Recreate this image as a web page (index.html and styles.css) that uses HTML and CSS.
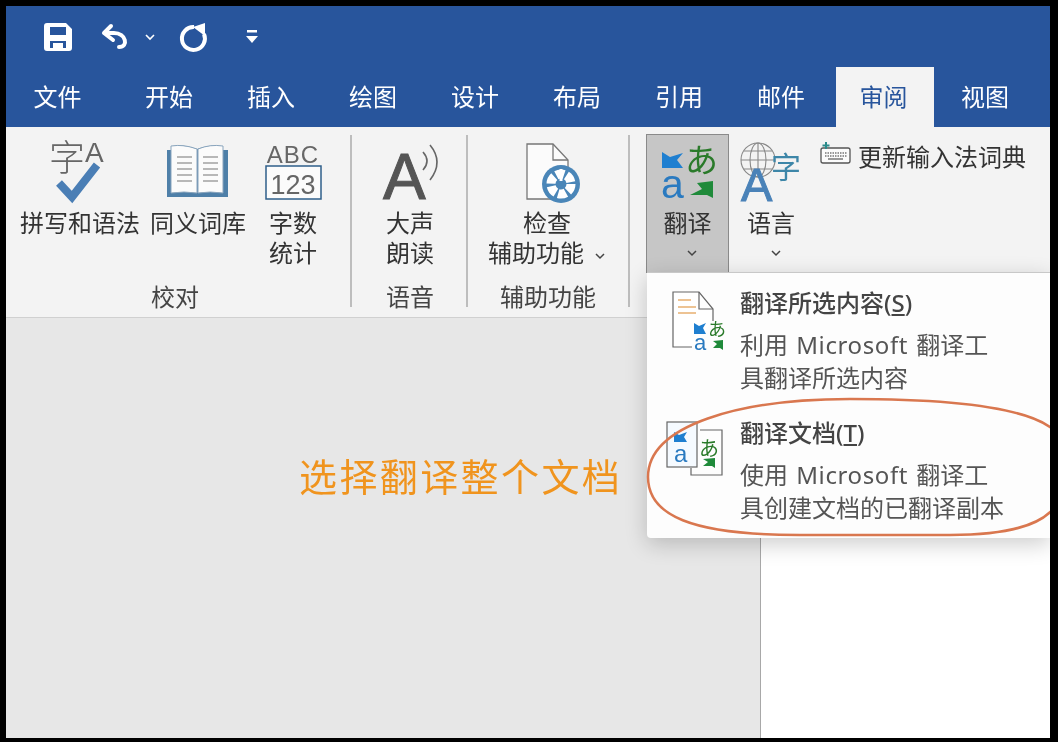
FILE: index.html
```html
<!DOCTYPE html>
<html lang="zh-CN">
<head>
    <meta charset="UTF-8">
    <title>审阅 - 翻译</title>
    <link rel="stylesheet" href="styles.css">
</head>
<body>
<div class="window">
    <div class="titlebar">
        <svg class="qa qa-save" width="28" height="30">
            <path fill="#fff" fill-rule="evenodd" d="M3 1H22L28 7V26Q28 29 25 29H3Q0 29 0 26V4Q0 1 3 1ZM6 5V13H22V5ZM6 19V26H9V21H19V26H22V19Z"/>
        </svg>
        <svg class="qa qa-undo" width="30" height="28" fill="none" stroke="#fff" stroke-width="4" stroke-linecap="round" stroke-linejoin="round">
            <path d="M11 3L4 10L13 17"/>
            <path d="M5 10H14C26 10 29 24 19 24"/>
        </svg>
        <svg class="chev qa-chev" width="12" height="8"><path d="M2 2L6 6L10 2" fill="none" stroke="#fff" stroke-width="1.6"/></svg>
        <svg class="qa qa-redo" width="28" height="30">
            <path d="M16 5A11.500 11.500 0 1 0 26 12" fill="none" stroke="#fff" stroke-width="4"/>
            <path d="M27 1V14L15 5Z" fill="#fff"/>
        </svg>
        <svg class="qa qa-more" width="12" height="14">
            <path d="M1 0H11V2.500H1Z" fill="#fff"/>
            <path d="M0 6H12L6 13Z" fill="#fff"/>
        </svg>
    </div>

    <div class="tabs">
        <div class="tab tab-file">文件</div>
        <div class="tab">开始</div>
        <div class="tab">插入</div>
        <div class="tab">绘图</div>
        <div class="tab">设计</div>
        <div class="tab">布局</div>
        <div class="tab">引用</div>
        <div class="tab">邮件</div>
        <div class="tab active">审阅</div>
        <div class="tab">视图</div>
    </div>

    <div class="ribbon">
        <div class="group group-proof">
            <div class="group-items">
                <div class="item item-spell">
                    <svg class="icon" width="120" height="73">
                        <text class="svg-cjk svg-thin" x="29" y="36" font-size="36" fill="#666">字</text>
                        <text class="svg-latin" x="65" y="27" font-size="28" fill="#666">A</text>
                        <path d="M39 48L52 62L77 30" fill="none" stroke="#4a7eb5" stroke-width="8"/>
                    </svg>
                    <div class="label">拼写和语法</div>
                </div>
                <div class="item item-thes">
                    <svg class="icon" width="96" height="73">
                        <path d="M17 15H22V11Q34 9 47 14Q60 9 72 11V15H78V62H17Z" fill="#4e7fa8"/>
                        <path d="M21 11Q34 9 47 14V58Q34 56 21 58Z" fill="#fbfbfb" stroke="#8aa5bd"/>
                        <path d="M48 14Q60 9 73 11V58Q60 56 48 58Z" fill="#fbfbfb" stroke="#8aa5bd"/>
                        <path d="M27 22H42M27 28H42M27 34H42M27 40H42M27 46H42M53 22H68M53 28H68M53 34H68M53 40H68M53 46H68" stroke="#777" stroke-width="1.200"/>
                    </svg>
                    <div class="label">同义词库</div>
                </div>
                <div class="item item-count">
                    <svg class="icon" width="48" height="73">
                        <text class="svg-latin" x="24" y="28" font-size="24" text-anchor="middle" fill="#666" letter-spacing="1">ABC</text>
                        <rect x="-3" y="31" width="55" height="33" fill="#fbfbfb" stroke="#2f5f8a" stroke-width="1.500"/>
                        <text class="svg-latin" x="24" y="59" font-size="27" text-anchor="middle" fill="#666">123</text>
                    </svg>
                    <div class="label">字数<br>统计</div>
                </div>
            </div>
            <div class="group-label">校对</div>
        </div>

        <div class="group group-speech">
            <div class="group-items">
                <div class="item item-read">
                    <svg class="icon" width="48" height="73">
                        <text class="svg-latin" x="-3" y="64" font-size="64" fill="#555" stroke="#555">A</text>
                        <path d="M37 17Q45 26 37 35M44 10Q58 27 44 45" fill="none" stroke="#666" stroke-width="1.600"/>
                    </svg>
                    <div class="label">大声<br>朗读</div>
                </div>
            </div>
            <div class="group-label">语音</div>
        </div>

        <div class="group group-access">
            <div class="group-items">
                <div class="item item-check">
                    <svg class="icon" width="118" height="73">
                        <path d="M39 9H65L80 25V64H39Z" fill="#fbfbfb" stroke="#777" stroke-width="1.300"/>
                        <path d="M65 9V25H80" fill="none" stroke="#777" stroke-width="1.300"/>
                        <circle cx="73" cy="49" r="19" fill="#4a86b8"/>
                        <circle cx="73" cy="49" r="10" fill="none" stroke="#fff" stroke-width="9" stroke-dasharray="8 2.500"/>
                        <circle cx="73" cy="49" r="4" fill="#4a86b8"/>
                        <path d="M73 34V46" stroke="#fff" stroke-width="3"/>
                    </svg>
                    <div class="label">检查<br>辅助功能<svg class="chev chev-inline" width="12" height="8"><path d="M2 2L6 6L10 2" fill="none" stroke="#444" stroke-width="1.500"/></svg></div>
                </div>
            </div>
            <div class="group-label">辅助功能</div>
        </div>

        <div class="group group-lang">
            <div class="item item-translate">
                <svg class="icon" width="81" height="73">
                    <text class="svg-cjk" x="38" y="37" font-size="33" fill="#2a7a2a">あ</text>
                    <path d="M15 17L23 22L36 18L30 25L36 33H15Z" fill="#1f7fd0"/>
                    <text class="svg-latin" x="14" y="63" font-size="41" fill="#2a7ac0">a</text>
                    <path d="M66 46L50 48L55 54L43 60H60L66 63Z" fill="#1f8a3a"/>
                </svg>
                <div class="label">翻译</div>
                <svg class="chev chev-block chev-translate" width="12" height="30"><path d="M2 13L6 17L10 13" fill="none" stroke="#444" stroke-width="1.500"/></svg>
            </div>
            <div class="item item-language">
                <svg class="icon" width="66" height="73">
                    <g fill="none" stroke="#888" stroke-width="1.100">
                        <circle cx="20" cy="25" r="17"/>
                        <ellipse cx="20" cy="25" rx="8" ry="17"/>
                        <path d="M3 25H37M6 16H34M6 34H34M20 8V42"/>
                    </g>
                    <text class="svg-cjk" x="33" y="43" font-size="30" fill="#3d86a8">字</text>
                    <text class="svg-latin" x="3" y="66" font-size="47" fill="#4a82b8" stroke="#4a82b8">A</text>
                </svg>
                <div class="label">语言</div>
                <svg class="chev chev-block chev-language" width="12" height="30"><path d="M2 13L6 17L10 13" fill="none" stroke="#444" stroke-width="1.500"/></svg>
            </div>
            <div class="update-row">
                <svg class="icon-kbd" width="34" height="30">
                    <rect x="3" y="6" width="29" height="15" rx="2" fill="#fbfbfb" stroke="#555" stroke-width="1.300"/>
                    <path d="M7 11H29M7 14H29" stroke="#777" stroke-width="1.500" stroke-dasharray="1.500 1"/>
                    <path d="M10 17H25" stroke="#777" stroke-width="1.500"/>
                    <path d="M8 0V7M4.500 3.500H11.500" stroke="#2b8a8a" stroke-width="2"/>
                </svg>
                <span class="label">更新输入法词典</span>
            </div>
        </div>
    </div>

    <div class="doc">
        <div class="doc-side">选择翻译整个文档</div>
        <div class="doc-page"></div>
    </div>

    <div class="menu">
        <div class="menu-row">
            <svg class="menu-icon" width="93" height="130">
                <path d="M45 74H26V19H52L66 36V48" fill="#fff" stroke="#666" stroke-width="1.200"/>
                <path d="M52 19V36H66" fill="none" stroke="#666" stroke-width="1.200"/>
                <path d="M31 27H44M31 34H49M31 40H49" stroke="#e8b070" stroke-width="1.500"/>
                <path d="M47 50L52 53L59 50L56 55L59 61H47Z" fill="#1f7fd0"/>
                <text class="svg-latin" x="47" y="77" font-size="22" fill="#2a7ac0">a</text>
                <text class="svg-cjk" x="61" y="63" font-size="18" fill="#2a7a2a">あ</text>
                <path d="M76 67V77L73 75H66L70 71L66 68Z" fill="#1f8a3a"/>
            </svg>
            <div class="menu-text">
                <div class="menu-title">翻译所选内容(<u>S</u>)</div>
                <div class="menu-desc">利用 <span class="latin">Microsoft</span> 翻译工<br>具翻译所选内容</div>
            </div>
        </div>
        <div class="menu-row">
            <svg class="menu-icon" width="93" height="130">
                <path d="M53 27H75V72H44V65" fill="none" stroke="#666" stroke-width="1.200"/>
                <rect x="20" y="19" width="30" height="45" fill="#f5faff" stroke="#666" stroke-width="1.200"/>
                <path d="M27 29L32 32L40 29L37 34L40 39H27Z" fill="#1f7fd0"/>
                <text class="svg-latin" x="27" y="59" font-size="24" fill="#2a7ac0">a</text>
                <text class="svg-cjk" x="52" y="53" font-size="20" fill="#2a7a2a">あ</text>
                <path d="M68 55V65L65 63H56L61 59L56 56Z" fill="#1f8a3a"/>
            </svg>
            <div class="menu-text">
                <div class="menu-title">翻译文档(<u>T</u>)</div>
                <div class="menu-desc">使用 <span class="latin">Microsoft</span> 翻译工<br>具创建文档的已翻译副本</div>
            </div>
        </div>
    </div>

    <svg class="mark" width="1044" height="732" viewBox="6 6 1044 732">
        <path d="M1054 430C1030 409 960 399 850 399C740 399 648 425 648 477C648 515 690 535 800 535H950C1010 535 1040 525 1054 508" fill="none" stroke="#d9774f" stroke-width="2.500"/>
    </svg>
</div>
</body>
</html>
```

FILE: styles.css
```css
* {
    margin: 0;
    padding: 0;
    box-sizing: border-box;
}
body {
    background-color: #000;
    font-family: "Noto Sans", "Noto Sans CJK SC", sans-serif;
    font-size: 24px;
    color: #333;
    height: 742px;
    overflow: hidden;
}
.window {
    position: relative;
    width: 1044px;
    height: 732px;
    margin: 6px 0 0 6px;
    overflow: hidden;
    display: flex;
    flex-direction: column;
    background-color: #e7e7e7;
    filter: blur(0.4px); /* the shot is a soft upscale */
}
svg {
    display: block;
    overflow: visible;
}
.svg-cjk {
    font-family: "Noto Sans CJK SC", sans-serif;
}
.svg-latin {
    font-family: "Liberation Sans", sans-serif;
}
.svg-thin {
    font-weight: 300;
}

/* title bar */
.titlebar {
    height: 61px;
    background-color: #28559c;
    display: flex;
    align-items: center;
    padding-left: 38px;
}
.qa-undo {
    margin-left: 28px;
}
.qa-chev {
    margin-left: 14px;
}
.qa-redo {
    margin-left: 22px;
}
.qa-more {
    margin-left: 40px;
}

/* tabs */
.tabs {
    height: 60px;
    background-color: #28559c;
    display: flex;
    gap: 4px;
    padding-left: 3px;
}
.tab {
    width: 98px;
    padding-bottom: 3px;
    color: #fff;
    display: flex;
    align-items: center;
    justify-content: center;
}
.tab-file {
    margin-right: 9px;
    padding-right: 1px;
}
.tab.active {
    margin: 0 -2px 0 2px;
    padding-right: 3px;
    background-color: #f3f3f3;
    color: #28559c;
}

/* ribbon */
.ribbon {
    height: 191px;
    flex-shrink: 0;
    background-color: #f3f3f3;
    border-bottom: 1px solid #d0d0d0;
    display: flex;
    padding-top: 8px;
}
.group {
    height: 172px;
    display: flex;
    flex-direction: column;
    border-right: 2px solid #bdbdbd;
}
.group-items {
    height: 147px;
    display: flex;
    justify-content: center;
}
.group-label {
    height: 25px;
    line-height: 30px;
    text-align: center;
    color: #444;
}
.group-proof {
    width: 346px;
    padding: 0 20px 0 14px;
}
.group-proof .group-items {
    justify-content: flex-start;
}
.group-speech {
    width: 116px;
    padding-left: 2px;
}
.group-access {
    width: 162px;
}
.group-lang {
    border-right: none;
    flex: 1;
    flex-direction: row;
    align-items: flex-start;
    padding-left: 16px;
}
.label {
    line-height: 30px;
    text-align: center;
    white-space: nowrap;
    color: #333;
}
.item-spell {
    width: 120px;
}
.item-thes {
    width: 96px;
    margin-left: 10px;
}
.item-count {
    width: 48px;
    margin-left: 23px;
}
.item-read {
    width: 48px;
}
.item-check {
    width: 118px;
    margin-left: -2px;
}
.chev-inline {
    display: inline-block;
    margin-left: 10px;
    vertical-align: middle;
}
.chev-translate {
    margin-left: 39px;
}
.chev-language {
    margin-left: 32px;
}
.item-translate {
    width: 83px;
    height: 139px;
    margin-top: -1px;
    border: 1px solid #8a8a8a;
    background-color: #c6c6c6;
}
.item-language {
    width: 66px;
    margin-left: 9px;
}
.update-row {
    display: flex;
    align-items: center;
    gap: 6px;
    height: 30px;
    margin: 7px 0 0 14px;
}

/* document */
.doc {
    flex: 1;
    display: flex;
}
.doc-side {
    width: 755px;
    padding: 133px 0 0 293px;
    background-color: #e7e7e7;
    border-right: 1px solid #a8a8a8;
    color: #f0941e;
    font-size: 38px;
    letter-spacing: 2.400px;
    line-height: 50px;
}
.doc-page {
    flex: 1;
    background-color: #fff;
}

/* translate dropdown */
.menu {
    position: absolute;
    left: 641px;
    top: 266px;
    width: 403px;
    height: 266px;
    background-color: #fdfdfd;
    border-top: 1px solid #c8c8c8;
    border-bottom-left-radius: 4px;
    box-shadow: 0 6px 22px rgba(0, 0, 0, 0.2);
}
.menu-row {
    height: 130px;
    display: flex;
}
.menu-icon {
    flex-shrink: 0;
}
.menu-text {
    padding-top: 15px;
}
.menu-title {
    line-height: 30px;
    margin-bottom: 10px;
    font-weight: 500;
    color: #444;
}
.menu-desc {
    line-height: 33px;
    color: #555;
    white-space: nowrap;
    word-spacing: 2px;
}
.latin {
    letter-spacing: 0.600px;
}
.mark {
    position: absolute;
    left: 0;
    top: 0;
    pointer-events: none;
}
```
